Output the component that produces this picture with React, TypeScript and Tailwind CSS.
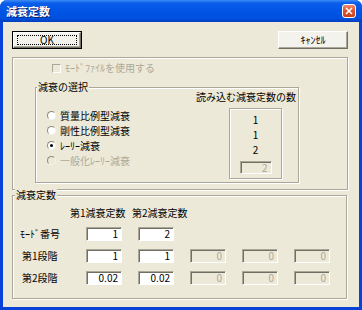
const face = 'bg-[#ECE9D8]';
const etched = 'border border-[#ACA899] shadow-[1px_1px_0_#fff,inset_1px_1px_0_#fff]';

function Edit({ value, disabled }: { value: string; disabled?: boolean }) {
  return (
    <div
      className={`flex h-[14px] w-[36px] items-center justify-end border border-t-[#ACA899] border-l-[#ACA899] border-r-white border-b-white pr-[3px] shadow-[inset_1px_1px_0_#716F64] ${
        disabled ? `${face} text-[#ACA899]` : 'bg-white text-black'
      }`}
    >
      {value}
    </div>
  );
}

function Radio({ label, checked, disabled }: { label: string; checked?: boolean; disabled?: boolean }) {
  return (
    <div className="flex h-[15px] items-center gap-[4px]">
      <span
        className={`flex h-[9px] w-[9px] items-center justify-center rounded-full border border-t-[#8E8B7C] border-l-[#8E8B7C] border-r-[#F4F3EE] border-b-[#F4F3EE] ${
          disabled ? face : 'bg-white'
        }`}
      >
        {checked ? <span className="h-[3px] w-[3px] rounded-full bg-black" /> : null}
      </span>
      <span className={disabled ? 'text-[#ACA899]' : 'text-black'}>{label}</span>
    </div>
  );
}

function Button({ children, isDefault }: { children: React.ReactNode; isDefault?: boolean }) {
  return (
    <div className={`h-[18px] w-[70px] ${isDefault ? 'border border-black' : ''}`}>
      <div className="flex h-full w-full items-center justify-center border border-t-white border-l-white border-r-[#716F64] border-b-[#716F64] bg-[#F3F2EC] shadow-[inset_-1px_-1px_0_#ACA899]">
        {isDefault ? (
          <span className="flex h-[10px] w-[60px] items-center justify-center border border-dotted border-black">
            {children}
          </span>
        ) : (
          children
        )}
      </div>
    </div>
  );
}

export default function App() {
  return (
    <div className="flex h-[310px] w-[362px] flex-col overflow-hidden rounded-t-[7px] bg-[#0842D8] font-['Noto_Sans_CJK_JP','Liberation_Sans',sans-serif] text-[10px] leading-[12px] text-black">
      {/* title bar */}
      <div className="flex h-[22px] shrink-0 items-center justify-between bg-[linear-gradient(180deg,#3C8CF8_0%,#0A5EEA_14%,#0055E5_50%,#0050DE_85%,#003DBD_100%)] pl-[6px] pr-[6px]">
        <span className="text-[11px] font-bold text-white [text-shadow:1px_1px_0_#0A1F6A]">減衰定数</span>
        <span className="flex h-[14px] w-[14px] items-center justify-center rounded-[3px] border border-white bg-[linear-gradient(180deg,#F08A6A_0%,#E0552E_45%,#C8401C_100%)]">
          <svg width="8" height="8" viewBox="0 0 8 8">
            <path d="M1 1L7 7M7 1L1 7" stroke="#fff" strokeWidth="1.6" />
          </svg>
        </span>
      </div>

      <div className={`mx-[3px] mb-[3px] flex flex-1 flex-col ${face}`}>
        {/* buttons */}
        <div className="mt-[9px] flex justify-between pl-[9px] pr-[11px]">
          <Button isDefault>OK</Button>
          <Button>ｷｬﾝｾﾙ</Button>
        </div>

        {/* mode file group */}
        <div className={`ml-[9px] mr-[11px] mt-[8px] h-[133px] ${etched}`}>
          <div className="ml-[39px] mt-[4px] flex h-[12px] items-center gap-[4px]">
            <span className="h-[9px] w-[9px] border border-t-[#ACA899] border-l-[#ACA899] border-r-white border-b-white" />
            <span className="text-[#ACA899]">ﾓｰﾄﾞﾌｧｲﾙを使用する</span>
          </div>

          <div className={`relative ml-[22px] mt-[13px] flex h-[96px] w-[264px] ${etched}`}>
            <span className={`absolute left-[1px] top-[-7px] px-[1px] ${face}`}>減衰の選択</span>
            <div className="flex-1 pl-[11px] pt-[20px]">
              <Radio label="質量比例型減衰" />
              <Radio label="剛性比例型減衰" />
              <Radio label="ﾚｰﾘｰ減衰" checked />
              <Radio label="一般化ﾚｰﾘｰ減衰" disabled />
            </div>
            <div className="flex w-[103px] flex-col pt-[3px]">
              <span className="ml-[1px] whitespace-nowrap">読み込む減衰定数の数</span>
              <div className={`ml-[34px] mt-[5px] flex h-[71px] w-[53px] flex-col items-center pt-[3px] ${etched}`}>
                <div className="flex h-[15px] items-center">1</div>
                <div className="flex h-[15px] items-center">1</div>
                <div className="flex h-[15px] items-center">2</div>
                <div className="mt-[4px]">
                  <div className="flex h-[13px] w-[32px] items-center justify-end border border-t-[#ACA899] border-l-[#ACA899] border-r-white border-b-white pr-[3px] text-[#ACA899] shadow-[inset_1px_1px_0_#716F64]">
                    2
                  </div>
                </div>
              </div>
            </div>
          </div>
        </div>

        {/* damping constants group */}
        <div className={`relative ml-[9px] mr-[12px] mt-[5px] h-[104px] ${etched}`}>
          <span className={`absolute left-[2px] top-[-7px] px-[1px] ${face}`}>減衰定数</span>
          <div className="ml-[57px] mt-[11px] flex">
            <span className="w-[62px]">第1減衰定数</span>
            <span>第2減衰定数</span>
          </div>
          <div className="mt-[8px] flex flex-col gap-[8px] pl-[7px]">
            <div className="flex items-center gap-[16px]">
              <span className="w-[50px]">ﾓｰﾄﾞ番号</span>
              <Edit value="1" />
              <Edit value="2" />
            </div>
            <div className="flex items-center gap-[16px]">
              <span className="w-[50px] pl-[2px]">第1段階</span>
              <Edit value="1" />
              <Edit value="1" />
              <Edit value="0" disabled />
              <Edit value="0" disabled />
              <Edit value="0" disabled />
            </div>
            <div className="flex items-center gap-[16px]">
              <span className="w-[50px] pl-[2px]">第2段階</span>
              <Edit value="0.02" />
              <Edit value="0.02" />
              <Edit value="0" disabled />
              <Edit value="0" disabled />
              <Edit value="0" disabled />
            </div>
          </div>
        </div>
      </div>
    </div>
  );
}
